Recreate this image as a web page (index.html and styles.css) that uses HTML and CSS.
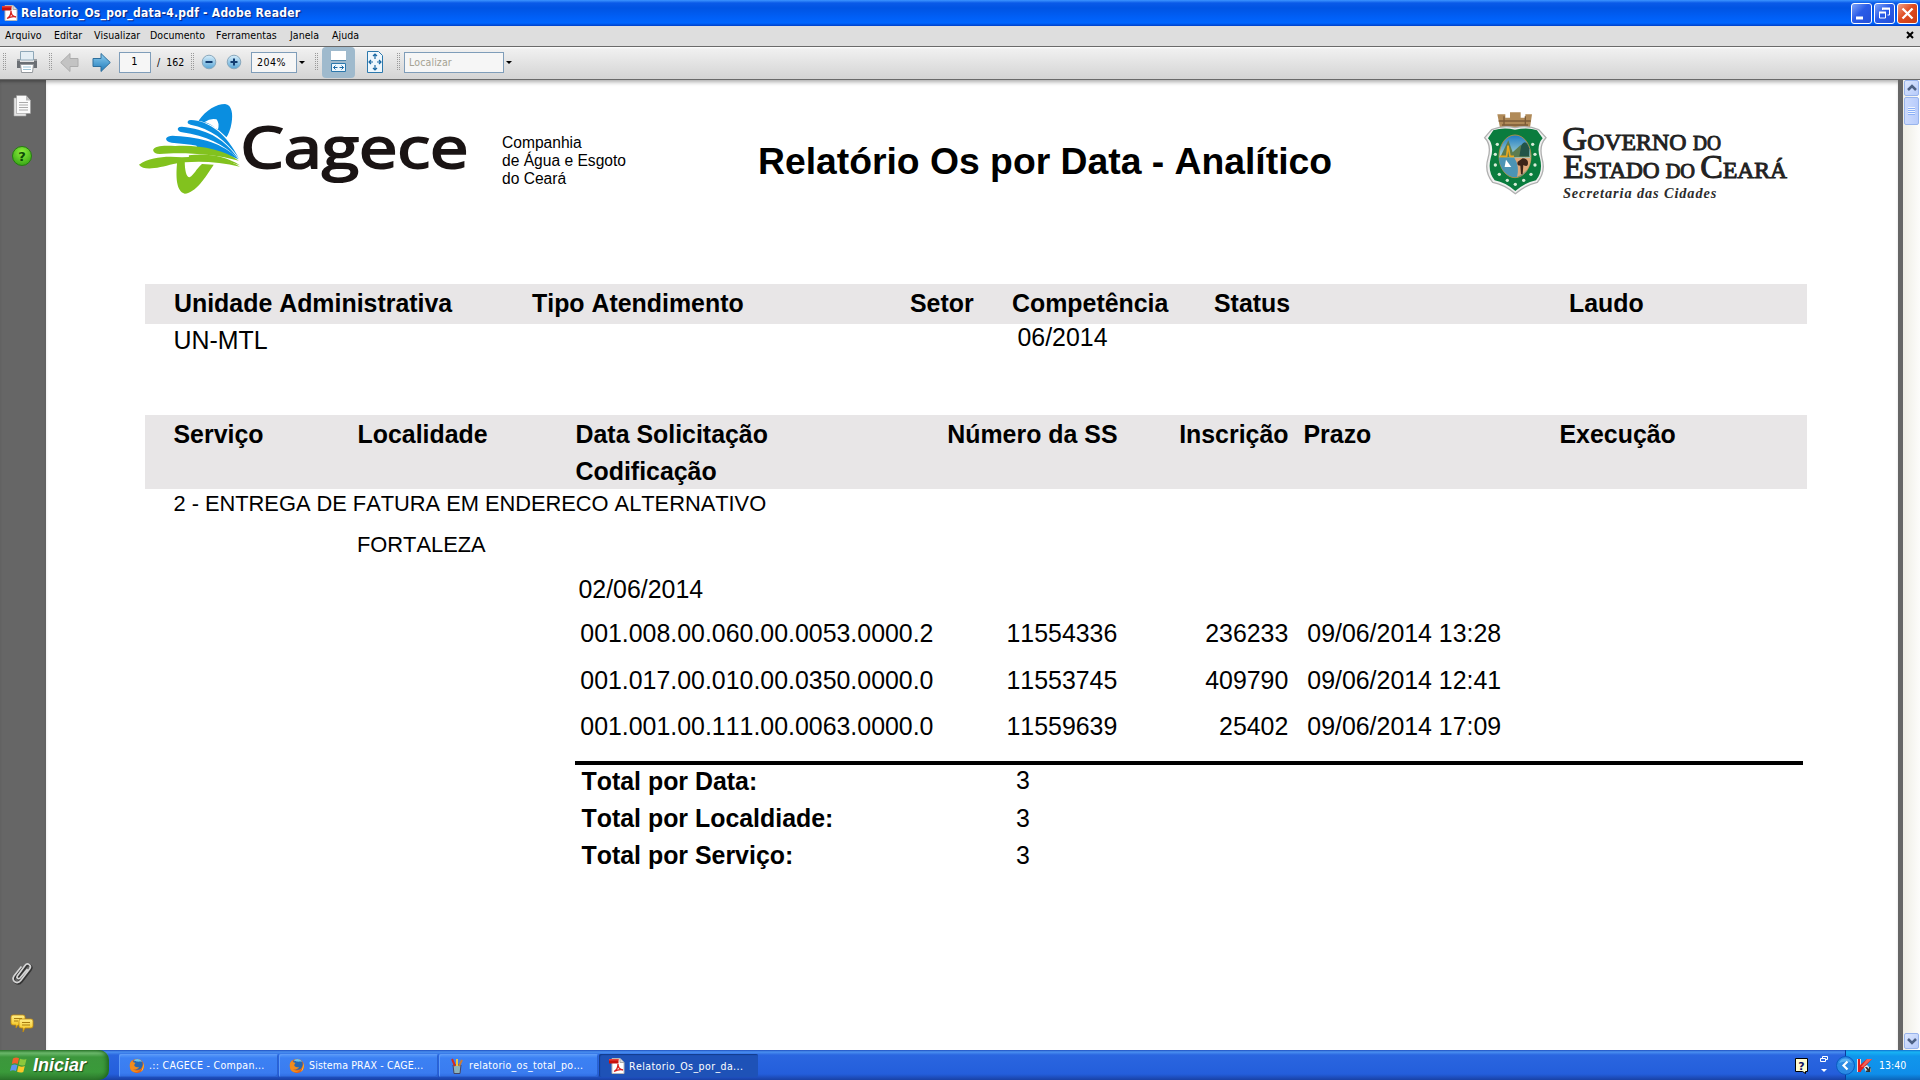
FILE: index.html
```html
<!DOCTYPE html>
<html lang="pt-BR">
<head>
<meta charset="utf-8">
<title>Relatorio_Os_por_data-4.pdf - Adobe Reader</title>
<link rel="stylesheet" href="styles.css">
</head>
<body>
<svg width="0" height="0" class="defs">
  <defs>
    <linearGradient id="blueArrow" x1="0" y1="0" x2="0" y2="1"><stop offset="0" stop-color="#8fd0f2"/><stop offset="1" stop-color="#1e78b8"/></linearGradient>
    <linearGradient id="orb" x1="0" y1="0" x2="0" y2="1"><stop offset="0" stop-color="#d8eefa"/><stop offset="1" stop-color="#5aa6d6"/></linearGradient>
    <linearGradient id="note" x1="0" y1="0" x2="0" y2="1"><stop offset="0" stop-color="#ffef8a"/><stop offset="1" stop-color="#f2bd10"/></linearGradient>
    <radialGradient id="green" cx=".5" cy=".3" r=".8"><stop offset="0" stop-color="#8df03c"/><stop offset="1" stop-color="#2c9c10"/></radialGradient>
    <linearGradient id="sky" x1="0" y1="0" x2="0" y2="1"><stop offset="0" stop-color="#1c7ac4"/><stop offset=".5" stop-color="#a8d4d0"/><stop offset="1" stop-color="#3a94b8"/></linearGradient>
    <symbol id="pdf" viewBox="0 0 16 16">
      <path d="M3 .5h8l4 4v11H3z" fill="#fff" stroke="#b8b8b8"/>
      <path d="M11 .5v4h4" fill="#ddd" stroke="#aaa"/>
      <path d="M0 1h9.500v4.500H0z" fill="#c8100c"/><path d="M0 1h9.500v1.500H0z" fill="#e84038"/>
      <path d="M5 13.500c3-1.500 4-5 4-7.500 0 3 2 5.500 5 6-3-1-6 0-9 1.500z" fill="none" stroke="#d8201c" stroke-width="1.300"/>
    </symbol>
    <symbol id="firefox" viewBox="0 0 16 16">
      <circle cx="8" cy="8" r="7.200" fill="#e4641a"/>
      <circle cx="8.500" cy="6.500" r="5.200" fill="#2468b4"/>
      <path d="M5 2c3-2 7-1 8 2-2-1-3 0-5-.5S5.500 3.500 5 2z" fill="#6cc4ec"/>
      <path d="M1 5c1-1 1.500-2 2-3 .5 1.500 1.500 2.500 3.500 3C5 6.500 5 7.500 6 8.500c1.500 1.200 3 .3 4 .8-1 2-4 2.700-6 1.700 3 3 7 2 8.500-1.500-1 4-7 6.500-10.500 2.800C.8 10.500.5 7.500 1 5z" fill="#f08c1c"/>
      <path d="M14 5c1.300 3.500.5 7-2 8.800 1.500-2.500 2.200-5.500 2-8.800z" fill="#ffd23c"/>
    </symbol>
  </defs>
</svg>

<div class="app">
  <header class="titlebar">
    <svg class="title-icon" width="16" height="16"><use href="#pdf"/></svg>
    <span class="title-text">Relatorio_Os_por_data-4.pdf - Adobe Reader</span>
    <div class="window-buttons">
      <span class="win-btn"><svg width="19" height="19"><path d="M4 12.500h7v3H4z" fill="#fff"/></svg></span>
      <span class="win-btn"><svg width="19" height="19" fill="none" stroke="#fff"><path d="M7.500 6V5h7v6H12.500" /><path d="M7 4.500h8" stroke-width="2"/><path d="M4.500 8.500h6v5.500h-6z"/><path d="M4 8.500h7" stroke-width="2"/></svg></span>
      <span class="win-btn close"><svg width="19" height="19"><path d="M4.500 4.500l10 10M14.500 4.500l-10 10" stroke="#fff" stroke-width="2.300"/></svg></span>
    </div>
  </header>

  <nav class="menubar">
    <span class="m1">Arquivo</span><span class="m2">Editar</span><span class="m3">Visualizar</span><span class="m4">Documento</span><span class="m5">Ferramentas</span><span class="m6">Janela</span><span class="m7">Ajuda</span>
    <svg class="menu-close" width="8" height="8"><path d="M1 1l6 6M7 1L1 7" stroke="#000" stroke-width="2"/></svg>
  </nav>

  <div class="toolbar">
    <i class="grip"></i>
    <svg class="print" width="22" height="24" viewBox="0 0 22 24">
      <path d="M4.500 1.500h13V10h-13z" fill="#e4eef4" stroke="#8fa8b8"/>
      <path d="M1 9h3v3h14V9h3v9H1z" fill="#6b6f74"/><path d="M1 9h3v2H1zM18 9h3v2h-3z" fill="#9a9ea2"/>
      <path d="M4.500 14.500h13l-1 8h-11z" fill="#fff" stroke="#94989c"/>
      <path d="M7 17h8M7 19.500h8" stroke="#9cc3d6"/>
    </svg>
    <i class="grip g2"></i>
    <svg class="back" width="19" height="21" viewBox="0 0 19 21"><path d="M.7 10.500L10 1.500v5h8v8h-8v5z" fill="#c3c3c3" stroke="#acacac"/></svg>
    <svg class="fwd" width="19" height="21" viewBox="0 0 19 21"><path d="M18.300 10.500L9 1.500v5H1v8h8v5z" fill="url(#blueArrow)" stroke="#2f6f9c"/></svg>
    <span class="field page">1</span>
    <span class="total">/&nbsp; 162</span>
    <i class="grip g3"></i>
    <svg class="minus" width="16" height="16" viewBox="0 0 16 16"><circle cx="8" cy="8" r="6.800" fill="url(#orb)" stroke="#8aa8bc"/><path d="M4.500 8h7" stroke="#123c70" stroke-width="2"/></svg>
    <svg class="plus" width="16" height="16" viewBox="0 0 16 16"><circle cx="8" cy="8" r="6.800" fill="url(#orb)" stroke="#8aa8bc"/><path d="M4.500 8h7M8 4.500v7" stroke="#123c70" stroke-width="2"/></svg>
    <span class="field zoom">204%</span>
    <i class="drop"></i>
    <i class="grip g4"></i>
    <span class="mode">
      <svg width="17" height="22" viewBox="0 0 17 22">
        <path d="M1 0h15v9H1z" fill="#fff"/><path d="M1 9.500h15" stroke="#4c86ac"/>
        <path d="M1.500 12.500h14v8h-14z" fill="#eef7fd" stroke="#2c78ac"/><path d="M3.500 16.500h4M9.500 16.500h4M5.500 14.500l-2 2 2 2M11.500 14.500l2 2-2 2" fill="none" stroke="#1868a4"/>
      </svg>
    </span>
    <svg class="fit" width="16" height="22" viewBox="0 0 16 22">
      <path d="M.5 .5h11l4 4v17H.5z" fill="#eef7fd" stroke="#2c78ac"/>
      <path d="M8 3v5M8 14v5M2 11h4M10 11h4M6 5l2-2 2 2M6 17l2 2 2-2M4 9l-2 2 2 2M12 9l2 2-2 2" fill="none" stroke="#1868a4" stroke-width="1.200"/>
    </svg>
    <i class="grip g5"></i>
    <span class="field find">Localizar</span>
    <i class="drop"></i>
  </div>

  <div class="workspace">
    <aside class="sidebar">
      <svg class="pages" width="20" height="24" viewBox="0 0 20 24">
        <path d="M1 4h12v18H1z" fill="#e4e4e4" stroke="#aaa" stroke-width=".6"/>
        <path d="M3.500 1.500h9.500l4.500 5v13h-14z" fill="#fafafa" stroke="#999" stroke-width=".6"/><path d="M13 1.500v5h4.500z" fill="#bbb"/>
        <path d="M6 8.500h9M6 11h9M6 13.500h9M6 16h9" stroke="#aaa"/>
      </svg>
      <svg class="help" width="22" height="22" viewBox="0 0 22 22"><circle cx="11" cy="11" r="9.500" fill="url(#green)" stroke="#247c10"/><text x="11" y="15.500" text-anchor="middle" class="q">?</text></svg>
      <svg class="clip" width="24" height="26" viewBox="0 0 24 26"><path d="M17 9.500l-7.500 9c-1.500 1.700-4-.2-2.700-2L14.500 6c2.500-3.300 7-.2 4.700 3.200l-9 11.800c-3.500 4.500-10 .5-6.700-4.500L11 7" transform="translate(1.500 .5)" fill="none" stroke="#333" stroke-width="2.400"/><path d="M17 9.500l-7.500 9c-1.500 1.700-4-.2-2.700-2L14.500 6c2.500-3.300 7-.2 4.700 3.200l-9 11.800c-3.500 4.500-10 .5-6.700-4.500L11 7" transform="translate(.5 -.5)" fill="none" stroke="#d4d4d4" stroke-width="1.700"/></svg>
      <svg class="notes" width="24" height="19" viewBox="0 0 24 19">
        <path d="M3 1h10q2 0 2 2v6q0 2-2 2H8l-2 3v-3H3q-2 0-2-2V3q0-2 2-2z" fill="url(#note)" stroke="#c48a08" stroke-width=".8"/>
        <path d="M11 5h10q2 0 2 2v5q0 2-2 2h-6l-2 4v-4h-2q-2 0-2-2V7q0-2 2-2z" fill="url(#note)" stroke="#c48a08" stroke-width=".8"/>
        <path d="M4 4.500h8M4 7h4M12 8.500h8M12 11h8" stroke="#a87c10"/>
      </svg>
    </aside>

    <main class="page-view">
      <div class="report-head">
        <svg class="cagece" width="382" height="120" viewBox="0 0 1109 360" preserveAspectRatio="none">
          <g fill="#0a8ee0">
            <path d="M228 92C250 60 280 42 305 42C326 44 328 75 324 98C321 118 315 132 309 142C280 110 255 98 228 92ZM246 96Q262 84 280 88Q290 100 284 120Q266 102 246 96Z" fill-rule="evenodd"/>
            <path d="M197 94Q200 88 215 91C265 98 310 135 345 205C308 150 262 115 205 104Q194 102 197 94Z"/>
            <path d="M168 115Q172 108 192 112C260 122 305 150 343 206C300 162 250 138 180 127Q166 124 168 115Z"/>
            <path d="M134 145Q140 135 162 138C235 142 300 160 342 206C290 178 230 164 150 158Q132 155 134 145Z"/>
            <path d="M220 160C270 162 315 180 345 208C312 192 268 180 225 176Z"/>
          </g>
          <g fill="#82c21e">
            <path d="M96 180C100 166 130 166 160 168C230 164 300 178 345 212C270 190 175 186 115 192Q98 192 96 180Z"/>
            <path d="M55 224C90 200 135 198 180 202C245 196 310 204 348 230C280 212 200 212 155 222C110 234 70 244 55 224Z"/>
            <path d="M200 196C250 188 310 198 348 226C300 208 250 202 200 204Z"/>
            <path d="M166 216L188 215C188 238 192 262 202 262C216 254 220 238 238 222L272 224C248 262 220 308 188 311C162 304 162 256 166 216Z"/>
          </g>
          <text class="brand" x="350" y="234" textLength="662" lengthAdjust="spacingAndGlyphs">Cagece</text>
        </svg>
        <p class="company">Companhia<br>de Água e Esgoto<br>do Ceará</p>
        <h1 class="report-title">Relatório Os por Data - Analítico</h1>
        <svg class="gov" width="350" height="115" viewBox="0 0 1050 345">
          <path d="M112 58h24v10h14V52h32v16h14V58h20l-6 40h-90z" fill="#b08a58"/>
          <path d="M116 78h96M126 90h78M132 64v28M196 64v28" stroke="#7c5c38" stroke-width="4" fill="none"/>
          <path d="M95 104Q130 90 165 98Q205 90 236 104L258 128Q236 150 246 190Q258 230 232 262Q200 268 166 296Q132 268 98 262Q72 230 84 190Q96 150 74 128Z" fill="#f0f0f0" stroke="#b0b0b0" stroke-width="4"/>
          <path d="M100 106Q130 96 165 104Q205 96 231 106L248 130Q228 152 240 190Q250 228 228 256Q196 262 166 288Q136 262 104 256Q82 228 92 190Q104 152 84 130Z" fill="#0a7c3e"/>
          <ellipse cx="165" cy="184" rx="48" ry="64" fill="url(#sky)" stroke="#a89048" stroke-width="3"/>
          <path d="M120 188L145 136L158 172L182 150L210 186Z" fill="#5c7c50"/><path d="M184 150q14-20 24 10v24h-30z" fill="#235448"/>
          <path d="M163 188h50q-4 45-42 58q6-24-8-58z" fill="#e0a878"/><path d="M188 190q16 0 16 14t-14 6l-2 28h-5l-2-26q-12 0-8-12z" fill="#3c2418"/>
          <path d="M117 188h46q18 28 6 58q-48-6-52-58z" fill="#4c94b4"/><path d="M138 194l16 22h-20z" fill="#fff"/>
          <path d="M120 184h20l4-32 6 32h12" stroke="#e8a820" stroke-width="5" fill="none"/>
          <g fill="#d8ecd8"><circle cx="112" cy="148" r="5"/><circle cx="106" cy="178" r="5"/><circle cx="106" cy="210" r="5"/><circle cx="118" cy="238" r="5"/><circle cx="142" cy="256" r="5"/><circle cx="166" cy="268" r="5"/><circle cx="191" cy="256" r="5"/><circle cx="213" cy="238" r="5"/><circle cx="225" cy="210" r="5"/><circle cx="225" cy="178" r="5"/><circle cx="218" cy="148" r="5"/></g>
          <text class="gov-name" x="307" y="165" textLength="372" lengthAdjust="spacingAndGlyphs">Governo</text>
          <text class="gov-name of" x="699" y="165" textLength="84" lengthAdjust="spacingAndGlyphs">do</text>
          <text class="gov-name" x="310" y="248" textLength="289" lengthAdjust="spacingAndGlyphs">Estado</text>
          <text class="gov-name of" x="617" y="248" textLength="88" lengthAdjust="spacingAndGlyphs">do</text>
          <text class="gov-name" x="721" y="248" textLength="260" lengthAdjust="spacingAndGlyphs">Ceará</text>
          <text class="gov-dept" x="309" y="308" textLength="460" lengthAdjust="spacing">Secretaria das Cidades</text>
        </svg>
      </div>

      <section class="band summary-head">
        <span>Unidade Administrativa</span><span>Tipo Atendimento</span><span>Setor</span><span>Competência</span><span>Status</span><span>Laudo</span>
      </section>
      <section class="summary"><span>UN-MTL</span><span class="period">06/2014</span></section>

      <section class="band detail-head">
        <span>Serviço</span><span>Localidade</span><span>Data Solicitação<br>Codificação</span><span class="num">Número da SS</span><span class="num">Inscrição</span><span class="due">Prazo</span><span>Execução</span>
      </section>
      <div class="service">2 - ENTREGA DE FATURA EM ENDERECO ALTERNATIVO</div>
      <div class="city">FORTALEZA</div>
      <div class="date">02/06/2014</div>
      <div class="row r1"><span>001.008.00.060.00.0053.0000.2</span><span class="num">11554336</span><span class="num">236233</span><span class="when">09/06/2014 13:28</span></div>
      <div class="row r2"><span>001.017.00.010.00.0350.0000.0</span><span class="num">11553745</span><span class="num">409790</span><span class="when">09/06/2014 12:41</span></div>
      <div class="row r3"><span>001.001.00.111.00.0063.0000.0</span><span class="num">11559639</span><span class="num">25402</span><span class="when">09/06/2014 17:09</span></div>
      <div class="totals">
        <b>Total por Data:</b><span class="first">3</span>
        <b>Total por Localdiade:</b><span>3</span>
        <b>Total por Serviço:</b><span>3</span>
      </div>
    </main>

    <div class="scrollbar">
      <span class="sb-btn"><svg width="14" height="14"><path d="M3 9l4-4 4 4" fill="none" stroke="#4d6185" stroke-width="2.500"/></svg></span>
      <span class="thumb"><i></i></span>
      <span class="sb-btn down"><svg width="14" height="14"><path d="M3 5l4 4 4-4" fill="none" stroke="#4d6185" stroke-width="2.500"/></svg></span>
    </div>
  </div>

  <footer class="taskbar">
    <div class="start">
      <svg width="19" height="18" viewBox="0 0 19 18">
        <path d="M3 2.500q3-2 6-.3L7.600 8Q5 6.500 1.800 8z" fill="#f0622c"/><path d="M10 2.700q3 1.500 6.500.2L15 9q-3 1.200-6.300-.4z" fill="#8cc83c"/>
        <path d="M1.600 9.200q3-1.500 5.800 0L6 15q-3-1.500-6 0z" fill="#5c94f0"/><path d="M8.500 9.800q3 1.500 6.300.3L13.300 16q-3 1.200-6.200-.3z" fill="#fcc828"/>
      </svg>
      <span>Iniciar</span>
    </div>
    <div class="tasks">
      <div class="task t1"><svg width="16" height="16"><use href="#firefox"/></svg><span>.:: CAGECE - Compan...</span></div>
      <div class="task t2"><svg width="16" height="16"><use href="#firefox"/></svg><span>Sistema PRAX - CAGE...</span></div>
      <div class="task t3"><svg width="16" height="16" viewBox="0 0 16 16"><path d="M4 7h8l-1 8.500H5z" fill="#8cb4bc" stroke="#446"/><path d="M6 8L3 1" stroke="#d82c1c" stroke-width="2"/><path d="M8 8V1" stroke="#f0c83c" stroke-width="2"/><path d="M10 8l3-6" stroke="#c87c3c" stroke-width="2"/></svg><span>relatorio_os_total_po...</span></div>
      <div class="task t4 active"><svg width="16" height="16"><use href="#pdf"/></svg><span>Relatorio_Os_por_da...</span></div>
    </div>
    <div class="lang">
      <svg width="14" height="16" viewBox="0 0 14 16"><path d="M.5 .5h12v13h-2v2l-3-2h-7z" fill="#fffbd0" stroke="#000"/><text x="6.500" y="11.500" text-anchor="middle" class="ask">?</text></svg>
      <svg class="mini" width="10" height="18" viewBox="0 0 10 18"><path d="M3.500 3V1.500h5v3H7M1.500 3.500h5v3h-5z" fill="none" stroke="#fff"/><path d="M2 14h6l-3 3z" fill="#fff"/></svg>
    </div>
    <div class="tray">
      <svg class="chev" width="19" height="19" viewBox="0 0 19 19"><circle cx="9.500" cy="9.500" r="9" fill="#2a8ae4" stroke="#0b5cc0"/><path d="M3 7a7 7 0 0 1 13 0q-6-3-13 0z" fill="#6cc0f8" opacity=".7"/><path d="M11.500 5.500l-4 4 4 4" fill="none" stroke="#fff" stroke-width="2.200"/></svg>
      <svg class="kav" width="15" height="15" viewBox="0 0 15 15"><path d="M0 1h4v13H0z" fill="#f4d4d0"/><path d="M3 1v6l7-6h5L4 13v1H1V1z" fill="#e0201c"/><path d="M10 1h5L6 9l-2 0z" fill="#f06058"/><path d="M7 9l3-2 4 4v3H9z" fill="#e8e8e8"/><path d="M8 9h2l2 2V9h1.500v5H9v-1.500h1.500z" fill="#333"/></svg>
      <span class="clock">13:40</span>
    </div>
  </footer>
</div>
</body>
</html>
```
FILE: styles.css
```css
* { box-sizing: border-box; }
body { margin: 0; background: #fff; }
svg { display: block; flex: none; }
.defs { position: absolute; }
.app {
  width: 1920px; height: 1080px; overflow: hidden;
  display: flex; flex-direction: column;
  font-family: "DejaVu Sans Condensed", "DejaVu Sans", sans-serif; font-stretch: condensed;
  font-size: 11px; color: #000; white-space: nowrap; font-kerning: none;
}

/* window chrome */
.titlebar {
  height: 26px; flex: none; display: flex; align-items: center; padding: 0 2px 0 2px;
  background: linear-gradient(#3d95ff 0, #0a5ae8 3px, #0054e3 8px, #0060f8 18px, #0066ff 23px, #0040c8 26px);
}
.title-text {
  margin-left: 3px; color: #fff; font-weight: bold; font-size: 12px; letter-spacing: .24px;
  line-height: 26px; text-shadow: 1px 1px 1px #0a1e78;
}
.window-buttons { margin-left: auto; display: flex; gap: 2px; }
.win-btn {
  width: 21px; height: 21px; border: 1px solid #fff; border-radius: 3px;
  background: linear-gradient(135deg, #7fa4f8, #2a5ce8 45%, #2450d8);
}
.win-btn.close { background: linear-gradient(135deg, #f0a088, #e04c20 45%, #c83c14); }
.menubar {
  height: 20px; flex: none; display: flex; align-items: center; padding: 0 6px 2px 5px;
  background: #dedede; font-size: 10.500px; line-height: 18px; letter-spacing: .05px;
}
.m1 { width: 49px; } .m2 { width: 40px; } .m3 { width: 56px; } .m4 { width: 66px; }
.m5 { width: 74px; } .m6 { width: 42px; }
.menu-close { margin-left: auto; }
.toolbar {
  height: 34px; flex: none; display: flex; align-items: center; padding: 0 0 2px 3px;
  border-top: 1px solid #6a6a6a; border-bottom: 1px solid #6a6a6a;
  background: linear-gradient(#fff 0, #f0f0f0 2px, #d4d4d4 32px);
}
.grip {
  width: 3px; height: 18px; flex: none;
  background: repeating-linear-gradient(#9a9a9a 0 1px, transparent 1px 2px) 0 0 / 1px 100% no-repeat,
              repeating-linear-gradient(#9a9a9a 0 1px, transparent 1px 2px) 2px 0 / 1px 100% no-repeat;
}
.print { margin-left: 10px; }
.g2 { margin-left: 11px; }
.back { margin-left: 8px; }
.fwd { margin-left: 13px; }
.field {
  height: 21px; border: 1px solid #7f9db9; background: #f6f6f6; line-height: 18px;
}
.page { width: 32px; margin-left: 8px; text-align: center; padding-right: 1px; }
.total { margin-left: 6px; width: 34px; line-height: 18px; font-size: 10.500px; }
.minus { margin-left: 7px; }
.plus { margin-left: 9px; }
.g3 { margin-left: 0; }
.zoom { width: 46px; margin-left: 9px; padding-left: 5px; font-size: 10.500px; letter-spacing: .5px; }
.drop { margin-left: 2px; border: 3px solid transparent; border-top-color: #000; border-bottom: 0; }
.g4 { margin-left: 10px; }
.mode {
  width: 33px; height: 31px; margin-left: 4px; border-radius: 4px; background: #9fbacd;
  display: flex; align-items: center; justify-content: center;
}
.fit { margin-left: 12px; }
.g5 { margin-left: 14px; }
.find { width: 100px; margin-left: 4px; padding-left: 4px; color: #a5a293; font-size: 10.500px; letter-spacing: .1px; }

.workspace { flex: 1; min-height: 0; display: flex; background: #666; }
.sidebar { width: 46px; display: flex; flex-direction: column; align-items: center; padding: 14px 2px 17px 0; box-shadow: inset 0 3px 3px -1px #4a4a4a; }
.pages { margin-left: 1px; }
.help { margin: 27px 1px 0 0; }
.q { font: bold 13px "DejaVu Sans", sans-serif; fill: #0c4a08; }
.clip { margin: auto 0 0 0; }
.notes { margin: 28px 0 0 0; }
.page-view {
  width: 1852px; background: #fff; box-shadow: inset 0 4px 4px -2px #aaa;
  font-family: "Liberation Sans", Arial, sans-serif; font-stretch: normal; font-size: 24.920px; line-height: 30px;
}
.scrollbar {
  width: 17px; margin-left: auto; display: flex; flex-direction: column; align-items: center;
  background: linear-gradient(90deg, #eeede5, #fdfdfb); padding: 0;
}
.sb-btn, .thumb { width: 15px; border: 1px solid #98b4ec; border-radius: 2px; background: linear-gradient(135deg, #dce7fe, #b6cafa); }
.sb-btn { height: 16px; display: flex; align-items: center; justify-content: center; }
.thumb { height: 28px; margin-top: 1px; display: flex; align-items: center; justify-content: center; background: linear-gradient(90deg, #ccdafd, #b8ccfb); }
.thumb i { width: 7px; height: 8px; background: repeating-linear-gradient(#eef4fe 0 1px, #8cb0f8 1px 2px); }
.down { margin-top: auto; margin-bottom: 1px; }

/* report */
.report-head { height: 204px; display: flex; align-items: flex-start; padding-left: 74px; }
.cagece { margin-top: 10px; }
.brand { font: 172px "Open Sans", "Noto Sans", sans-serif; fill: #1a1414; stroke: #1a1414; stroke-width: 6px; }
.company { margin: 54px 0 0; width: 256px; font-size: 15.600px; line-height: 18px; }
.report-title { margin: 60px 0 0; width: 702px; font-size: 37.300px; line-height: 42px; font-weight: bold; }
.gov { margin-top: 15px; }
.gov-name { font: 104px "Liberation Serif", serif; font-variant: small-caps; fill: #222; stroke: #222; stroke-width: 3px; }
.gov-name.of { font-size: 84px; }
.gov-dept { font: italic bold 43px "Liberation Serif", serif; fill: #2c2c2c; }

.band, .summary { margin-left: 99px; width: 1662px; display: grid; align-items: start; }
.band { background: #e8e6e7; font-weight: bold; }
.summary-head { height: 40px; padding: 4px 0 0 29px; grid-template-columns: 358px 378px 102px 202px 355px auto; }
.summary { height: 91px; padding: 1px 0 0 28.500px; grid-template-columns: 844px auto; }
.period { line-height: 24px; }
.detail-head { height: 74px; padding: 1px 0 0 28.500px; line-height: 37px; grid-template-columns: 184px 218px 368px 174px 171px 271px auto; }
.num { text-align: right; }
.due { padding-left: 15px; }
.service, .city { font-size: 21.850px; line-height: 25px; padding-top: 2px; }
.service { height: 41px; padding-left: 127.500px; letter-spacing: -.02px; }
.city { height: 44px; padding-left: 311px; }
.date { height: 44px; padding-left: 532.500px; }
.row { display: grid; grid-template-columns: 359px 178px 171px auto; padding-left: 534.300px; }
.r1 { height: 47px; } .r2 { height: 46px; } .r3 { height: 50px; }
.when { padding-left: 19px; }
.totals {
  margin-left: 529px; width: 1228px; border-top: 4px solid #000; padding: 1px 0 0 6.500px;
  display: grid; grid-template-columns: 434.500px auto; grid-auto-rows: 37px;
}
.first { line-height: 28px; }

/* taskbar */
.taskbar {
  height: 30px; flex: none; display: flex; color: #fff;
  background: linear-gradient(#1f4fc0 0, #4a90f0 2px, #2a66e0 5px, #245edb 24px, #1941a5 30px);
}
.start {
  width: 109px; display: flex; align-items: center; padding-left: 10px; border-radius: 0 10px 10px 0;
  background: linear-gradient(#2e7a2e 0, #6cb86c 3px, #3c973c 7px, #3a9a3a 22px, #2c762c 30px);
  box-shadow: inset -4px 0 5px -2px #1c601c;
}
.start span { margin-left: 4px; font: italic bold 18px/28px "Liberation Sans", sans-serif; text-shadow: 1px 1px 1px #1c4a1c; }
.tasks { display: flex; gap: 1px; padding: 4px 0 3px 10px; }
.task {
  width: 159px; display: flex; align-items: center; gap: 4px; padding-left: 10px; border-radius: 2px;
  background: linear-gradient(#5a9cfa, #3c81f3 4px, #3a7cf0 19px, #2e6be0); font-size: 10.500px; letter-spacing: .3px;
  box-shadow: inset 1px 1px 0 #5d9bf8, inset -1px -1px 0 #2a62d0;
}
.task span { padding-bottom: 2px; }
.task.active span { padding-bottom: 0; }
.t2 { letter-spacing: .15px; }
.t4 { letter-spacing: .4px; }
.task.active { background: #1e52b7; box-shadow: inset 1px 1px 1px #123c8c; }
.lang { margin-left: auto; display: flex; padding: 8px 16px 0 0; }
.mini { margin: -3px 0 0 10px; }
.tray {
  width: 75px; display: flex; align-items: center;
  background: linear-gradient(#1070d0 0, #18b4f4 2px, #1096ec 6px, #0f8eea 24px, #0c64b8 30px);
  border-left: 1px solid #0a3c9c;
}
.chev { margin-left: -10px; }
.kav { margin-left: 2px; }
.clock { margin-left: 7px; padding-bottom: 1px; font-size: 10.500px; }
.ask { font: bold 11px "DejaVu Sans", sans-serif; fill: #101060; }
```
